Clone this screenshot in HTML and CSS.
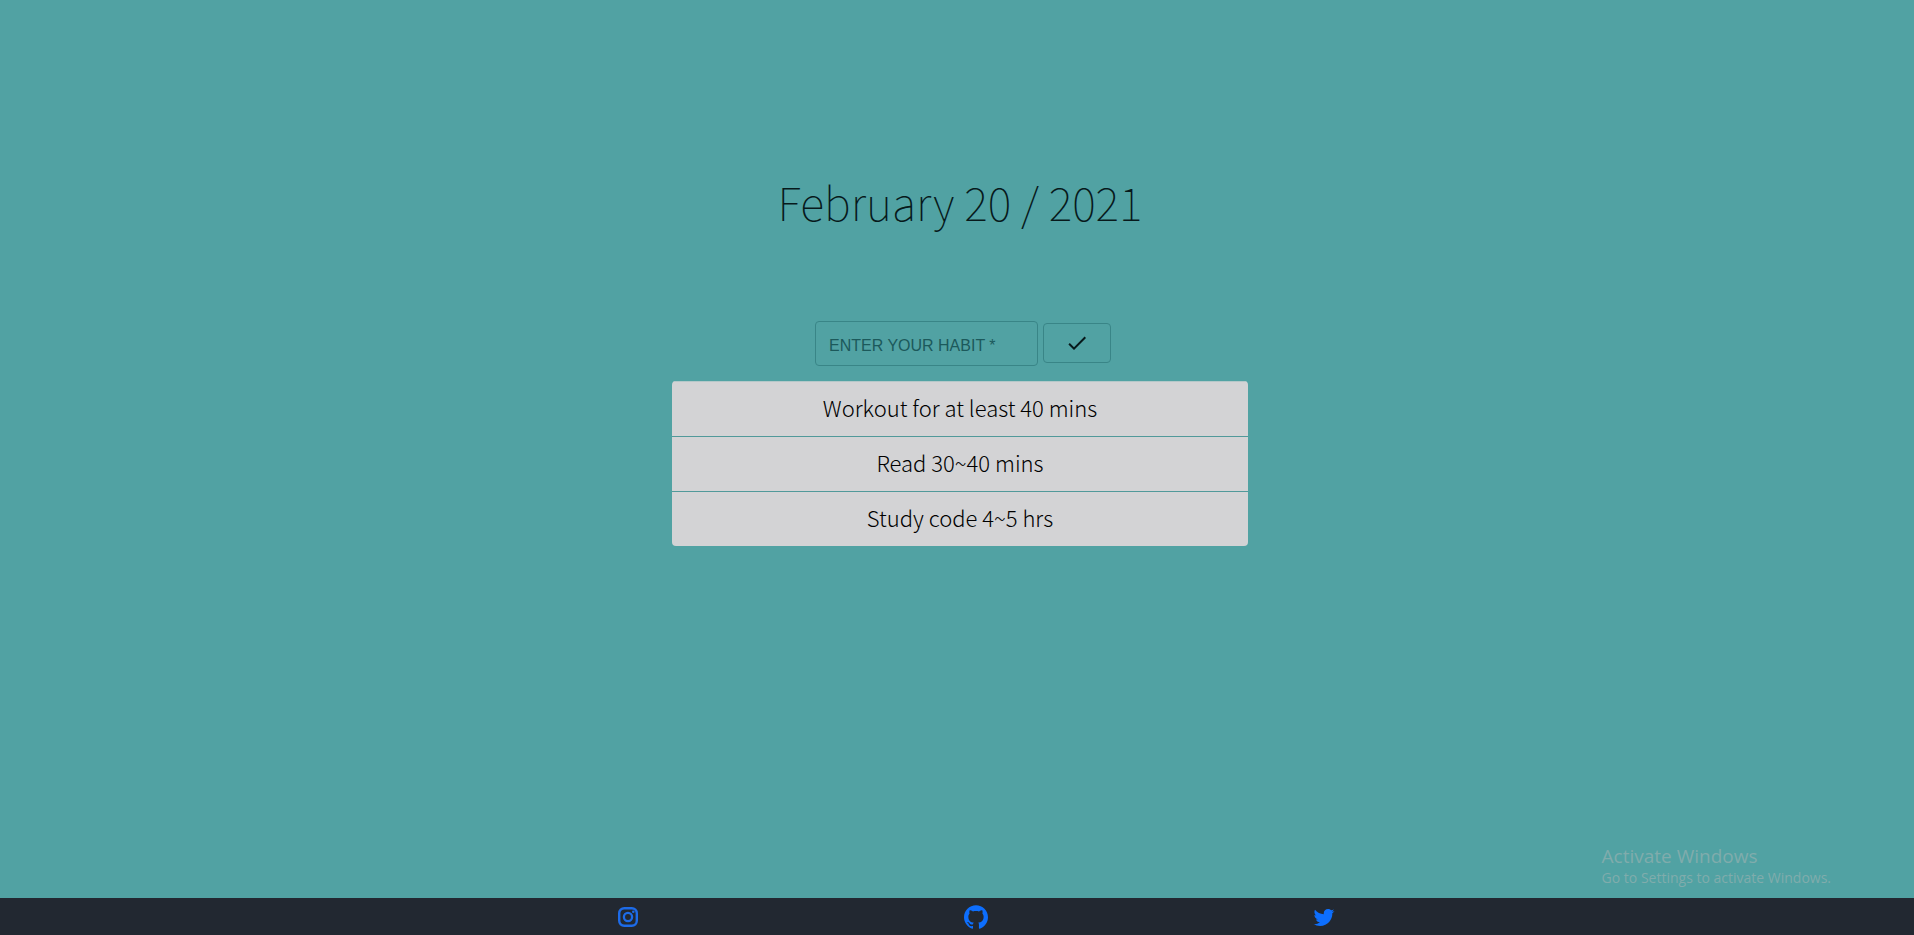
FILE: index.html
```
<!DOCTYPE html>
<html lang="en">
<head>
<meta charset="utf-8">
<title>Habit tracker</title>
<link rel="stylesheet" href="styles.css">
</head>
<body>
<main class="tracker">
  <h1 class="date">February 20 / 2021</h1>
  <form class="habit-form">
    <input class="habit-input" type="text" placeholder="ENTER YOUR HABIT *" aria-label="Enter your habit" required>
    <button class="habit-submit" type="submit" aria-label="Add habit">
      <svg class="check" viewBox="0 0 24 24" aria-hidden="true"><path d="M9 16.17 4.83 12l-1.42 1.41L9 19 21 7l-1.41-1.41z"/></svg>
    </button>
  </form>
  <ul class="habit-list">
    <li class="habit">Workout for at least 40 mins</li>
    <li class="habit">Read 30~40 mins</li>
    <li class="habit">Study code 4~5 hrs</li>
  </ul>
</main>
<aside class="watermark">
  <p class="watermark-title">Activate Windows</p>
  <p class="watermark-text">Go to Settings to activate Windows.</p>
</aside>
<footer class="footer">
  <nav class="social">
    <a class="social-link instagram" href="#" aria-label="Instagram">
      <svg class="icon" viewBox="0 0 24 24" aria-hidden="true"><rect x="3.2" y="3.2" width="17.6" height="17.6" rx="5" fill="none" stroke="currentColor" stroke-width="2.4"/><circle cx="12" cy="12" r="4.1" fill="none" stroke="currentColor" stroke-width="2.3"/><circle cx="17.3" cy="6.7" r="1.3" fill="currentColor"/></svg>
    </a>
    <a class="social-link" href="#" aria-label="GitHub">
      <svg class="icon" viewBox="0 0 24 24" aria-hidden="true"><path fill="currentColor" d="M12 .297c-6.63 0-12 5.373-12 12 0 5.303 3.438 9.8 8.205 11.385.6.113.82-.258.82-.577 0-.285-.01-1.04-.015-2.04-3.338.724-4.042-1.61-4.042-1.61C4.422 18.07 3.633 17.7 3.633 17.7c-1.087-.744.084-.729.084-.729 1.205.084 1.838 1.236 1.838 1.236 1.07 1.835 2.809 1.305 3.495.998.108-.776.417-1.305.76-1.605-2.665-.3-5.466-1.332-5.466-5.93 0-1.31.465-2.38 1.235-3.22-.135-.303-.54-1.523.105-3.176 0 0 1.005-.322 3.3 1.23.96-.267 1.98-.399 3-.405 1.02.006 2.04.138 3 .405 2.28-1.552 3.285-1.23 3.285-1.23.645 1.653.24 2.873.12 3.176.765.84 1.23 1.91 1.23 3.22 0 4.61-2.805 5.625-5.475 5.92.42.36.81 1.096.81 2.22 0 1.606-.015 2.896-.015 3.286 0 .315.21.69.825.57C20.565 22.092 24 17.592 24 12.297c0-6.627-5.373-12-12-12"/></svg>
    </a>
    <a class="social-link" href="#" aria-label="Twitter">
      <svg class="icon" viewBox="0 0 24 24" aria-hidden="true"><path fill="currentColor" d="M22.46 6c-.77.35-1.6.58-2.46.69.88-.53 1.56-1.37 1.88-2.38-.83.5-1.75.85-2.72 1.05C18.37 4.5 17.26 4 16 4c-2.35 0-4.27 1.92-4.27 4.29 0 .34.04.67.11.98C8.28 9.09 5.11 7.38 3 4.79c-.37.63-.58 1.37-.58 2.15 0 1.49.75 2.81 1.91 3.56-.71 0-1.37-.2-1.95-.5v.03c0 2.08 1.48 3.82 3.44 4.21a4.22 4.22 0 0 1-1.93.07 4.28 4.28 0 0 0 4 2.98 8.521 8.521 0 0 1-5.33 1.84c-.34 0-.68-.02-1.02-.06C3.44 20.29 5.7 21 8.12 21 16 21 20.33 14.46 20.33 8.79c0-.19 0-.37-.01-.56.84-.6 1.56-1.36 2.14-2.23z"/></svg>
    </a>
  </nav>
</footer>
</body>
</html>
```
FILE: styles.css
```
* { box-sizing: border-box; }

body {
  margin: 0;
  min-height: 100vh;
  display: flex;
  flex-direction: column;
  background: #51a2a3;
  color: #07191b;
  font-family: "Noto Sans CJK KR", "Noto Sans", sans-serif;
}

.tracker {
  flex: 1;
  display: flex;
  flex-direction: column;
  align-items: center;
  padding: 166px 16px 32px 22px;
}

.date {
  margin: 0 0 83px;
  font-size: 45px;
  font-weight: 100;
  line-height: 72px;
}

.habit-form {
  display: flex;
  align-items: center;
  gap: 5px;
  margin: 0 0 15px;
  padding-left: 6px;
}

.habit-input {
  width: 223px;
  height: 45px;
  padding: 4px 13px 0;
  border: 1px solid #398587;
  border-radius: 4px;
  background: transparent;
  color: #16494c;
  font-family: "Liberation Sans", Arial, sans-serif;
  font-size: 16px;
}

.habit-input::placeholder {
  color: #1c595b;
  opacity: 1;
}

.habit-submit {
  display: flex;
  align-items: center;
  justify-content: center;
  width: 68px;
  height: 40px;
  margin-bottom: 2px;
  padding: 0;
  border: 1px solid #398587;
  border-radius: 4px;
  background: transparent;
}

.check {
  width: 24px;
  height: 24px;
  fill: #07191b;
}

.habit-list {
  width: 100%;
  max-width: 576px;
  margin: 0;
  padding: 0;
  list-style: none;
  border-radius: 4px;
  overflow: hidden;
  background: #d3d3d5;
}

.habit {
  padding: 7px 16px 11px;
  border-top: 1px solid #b4c8c9;
  color: #000;
  font-size: 22px;
  font-weight: 300;
  line-height: 36px;
  text-align: center;
}

.habit + .habit { border-top-color: #51999a; }

.watermark {
  position: absolute;
  right: 83px;
  bottom: 47px;
  color: #80acac;
  font-family: "Open Sans", "Noto Sans", sans-serif;
}

.watermark p { margin: 0; }

.watermark-title {
  font-size: 19px;
  line-height: 24px;
}

.watermark-text {
  font-size: 14px;
  line-height: 20px;
}

.footer {
  background: #222831;
}

.social {
  display: grid;
  grid-template-columns: repeat(3, 1fr);
  justify-items: center;
  max-width: 1082px;
  margin: 0 auto;
  padding: 7px 0 6px 38px;
}

.social-link {
  display: flex;
  color: #0d6efd;
}

.instagram { color: #1d6be8; }

.icon {
  width: 24px;
  height: 24px;
}
```
